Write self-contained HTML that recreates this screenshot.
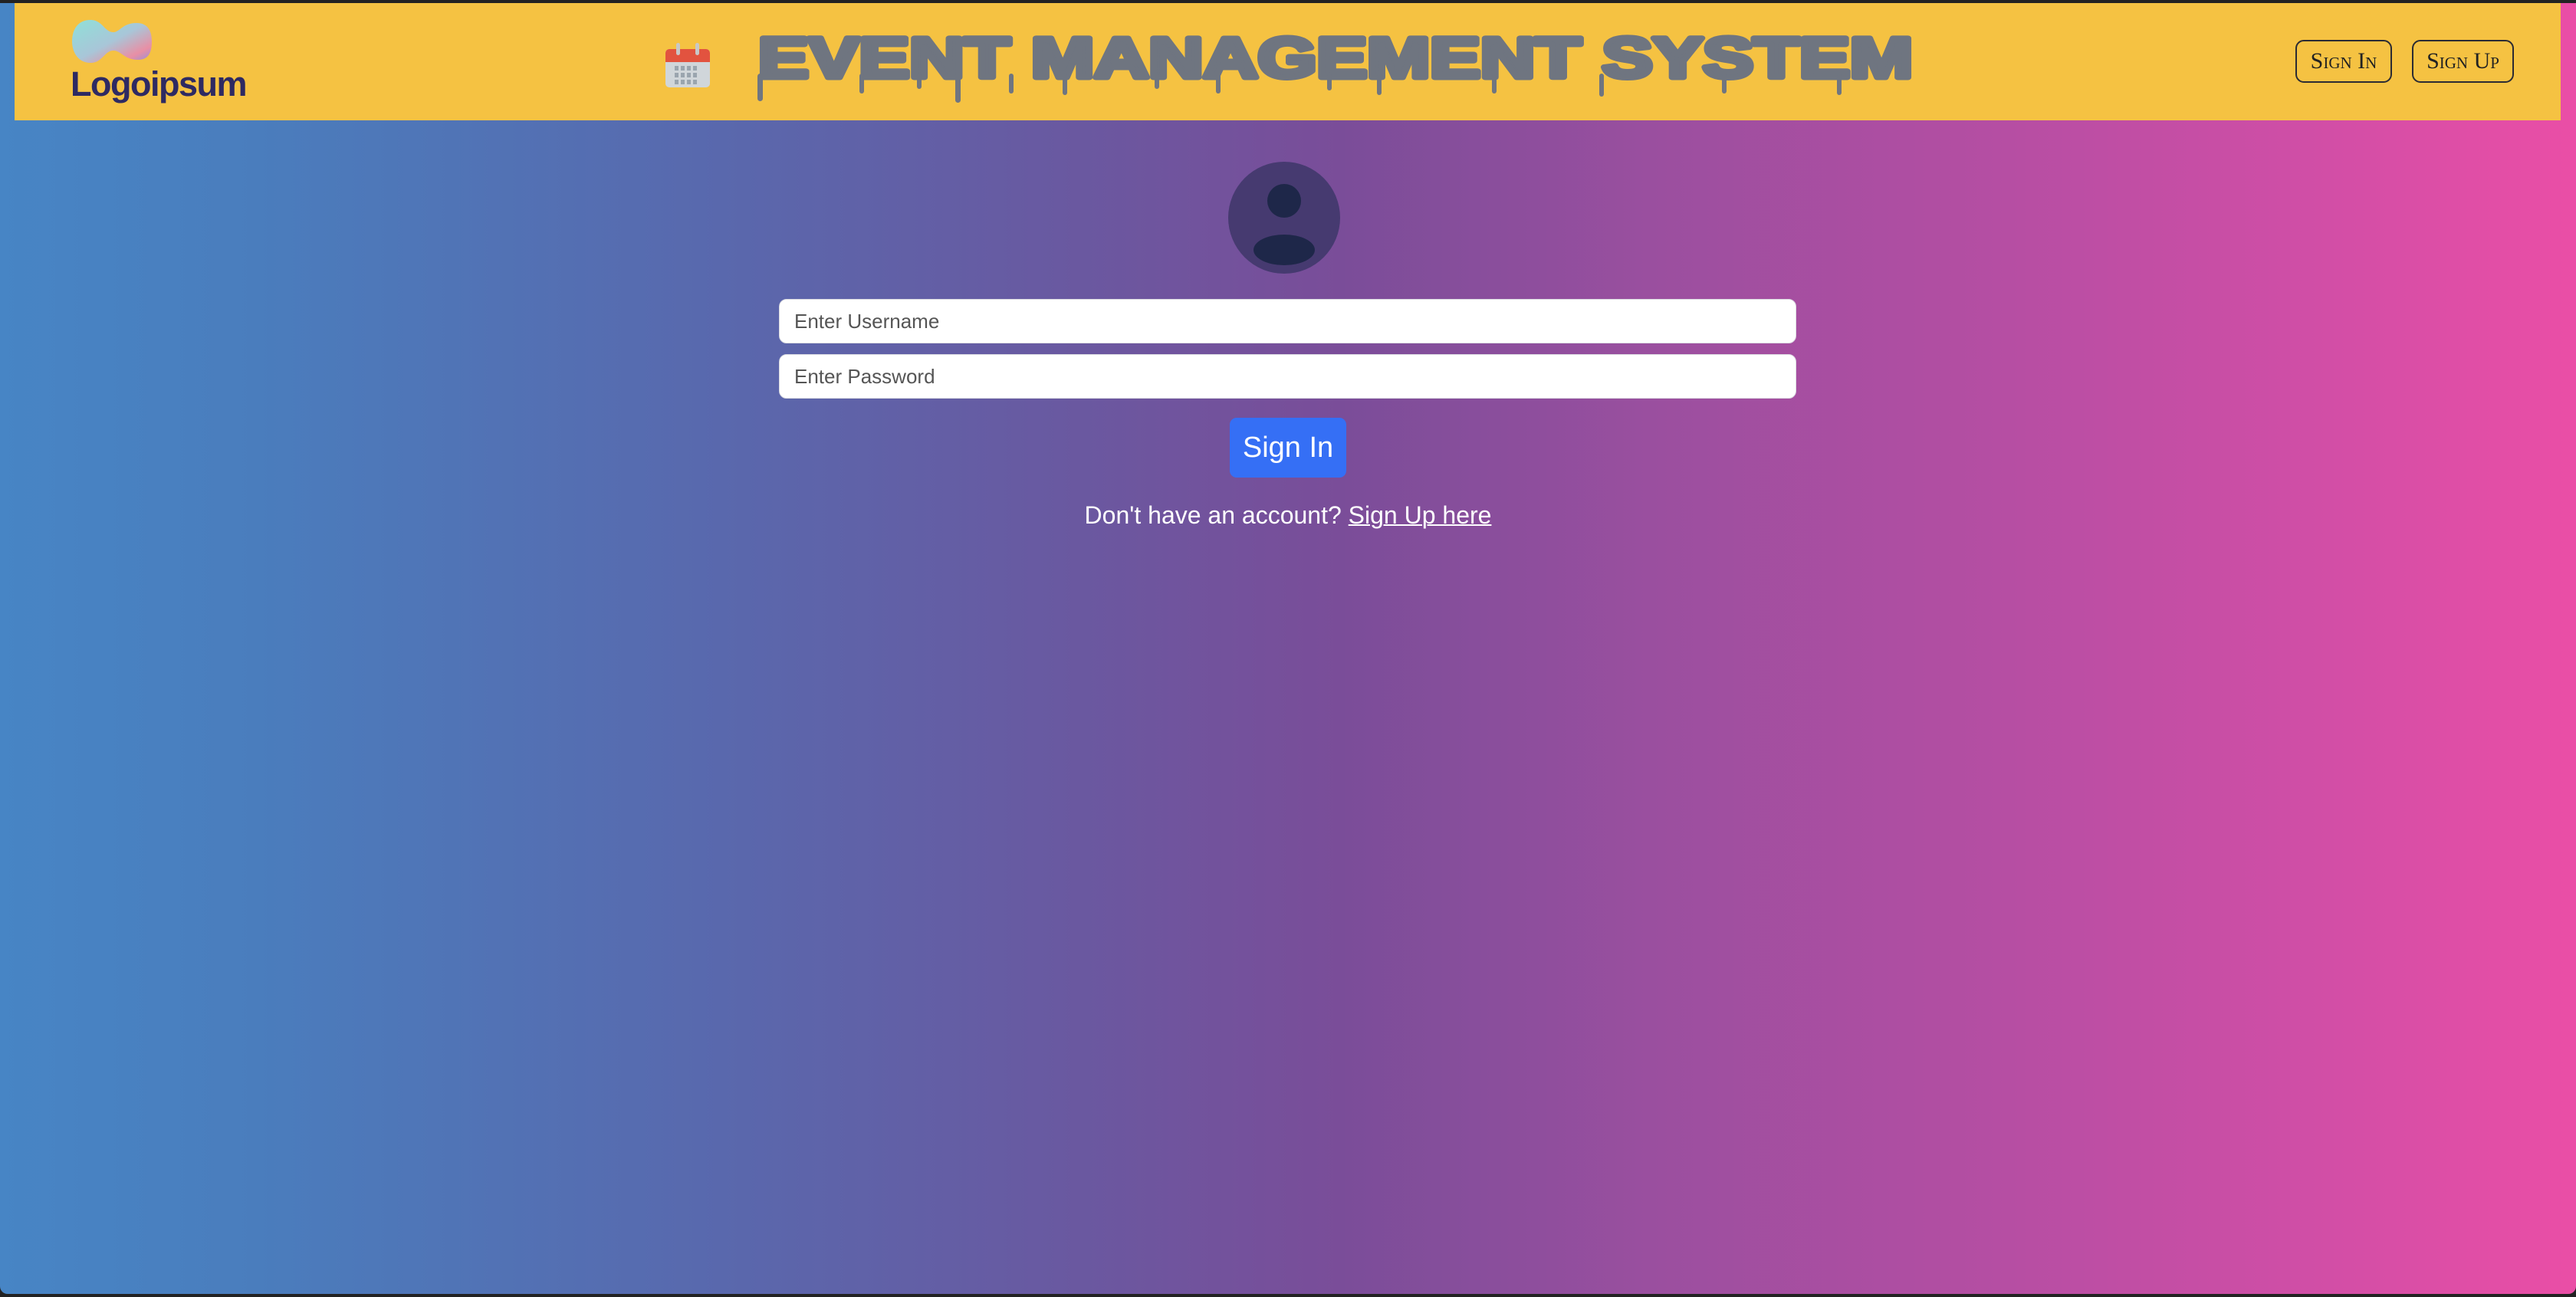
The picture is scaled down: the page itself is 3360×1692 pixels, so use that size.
<!DOCTYPE html>
<html><head><meta charset="utf-8"><style>
html,body{margin:0;padding:0;width:3360px;height:1692px;overflow:hidden;background:#222;}
.page{position:absolute;left:0;top:4px;width:3360px;height:1684px;border-radius:0 0 10px 10px;overflow:hidden;
background:linear-gradient(90deg,#4785c5 0%,#4a7dbd 10%,#5968ad 28%,#6a58a0 42%,#7a4d99 52%,#9a4f9f 64%,#b64ea3 78%,#d14ea6 90%,#ea4ea6 100%);}
.hdr{position:absolute;left:19px;top:0;width:3321px;height:153px;background:#f5c242;}
.logo-t{position:absolute;left:73px;top:80px;font:bold 45px "Liberation Sans",sans-serif;color:#2e2a62;letter-spacing:-1.5px;}
.btn{position:absolute;top:48px;height:56px;border:2px solid #2b2b33;border-radius:11px;box-sizing:border-box;font:30px "Liberation Serif",serif;font-variant:small-caps;color:#222;text-align:center;line-height:52px;}
.inp{position:absolute;left:1016px;width:1327px;height:58px;background:#fff;border-radius:10px;box-sizing:border-box;border:1px solid #dcdde2;font:26px "Liberation Sans",sans-serif;color:#555;padding-left:19px;line-height:57px;}
.sbtn{position:absolute;left:1604px;width:152px;height:78px;background:#356ff5;border-radius:9px;color:#fff;font:38px "Liberation Sans",sans-serif;text-align:center;line-height:78px;}
.foot{position:absolute;left:0;width:3360px;top:650px;text-align:center;color:#fff;font:32px "Liberation Sans",sans-serif;}
.foot u{text-decoration-thickness:2px;}
</style></head><body>
<div class="page">
<div class="hdr">
 <svg style="position:absolute;left:75px;top:22px" width="112" height="56" viewBox="0 0 112 56">
  <defs><linearGradient id="g" x1="0" x2="1" y1="0" y2="1"><stop offset="0" stop-color="#8fe0d8"/><stop offset="0.5" stop-color="#a8c6d8"/><stop offset="0.8" stop-color="#e88fa5"/><stop offset="1" stop-color="#8a8fe0"/></linearGradient></defs>
  <path d="M24 0C40 0 42 16 54 16C62 16 66 4 84 4C100 4 104 16 104 28C104 42 100 52 86 52C68 52 64 40 54 40C42 40 40 56 24 56C8 56 0 42 0 28C0 12 8 0 24 0Z" fill="url(#g)"/>
 </svg>
 <div class="logo-t">Logoipsum</div>
 <svg style="position:absolute;left:847px;top:50px" width="62" height="62" viewBox="0 0 62 62">
  <rect x="2" y="10" width="58" height="50" rx="5" fill="#d0d6da"/>
  <path d="M2 15a5 5 0 0 1 5-5h48a5 5 0 0 1 5 5v12H2z" fill="#e2533f"/>
  <rect x="16" y="2" width="5" height="16" rx="2.5" fill="#c8c8c8"/>
  <rect x="41" y="2" width="5" height="16" rx="2.5" fill="#c8c8c8"/>
  <g fill="#9aa5ae">
   <rect x="14" y="32" width="5" height="6"/><rect x="22" y="32" width="5" height="6"/><rect x="30" y="32" width="5" height="6"/><rect x="38" y="32" width="5" height="6"/>
   <rect x="14" y="41" width="5" height="6"/><rect x="22" y="41" width="5" height="6"/><rect x="30" y="41" width="5" height="6"/><rect x="38" y="41" width="5" height="6"/>
   <rect x="14" y="50" width="5" height="6"/><rect x="22" y="50" width="5" height="6"/><rect x="30" y="50" width="5" height="6"/><rect x="38" y="50" width="5" height="6"/>
  </g>
 </svg>
 <svg style="position:absolute;left:967px;top:20px" width="1520" height="115" viewBox="0 0 1520 115">
  <text x="3" y="77" textLength="1506" lengthAdjust="spacingAndGlyphs" font-family="Liberation Sans, sans-serif" font-weight="bold" font-size="74" fill="#6f7580" stroke="#6f7580" stroke-width="7" stroke-linejoin="round">EVENT MANAGEMENT SYSTEM</text>
  <g fill="#6f7580">
   <rect x="2" y="72" width="7" height="36" rx="3.5"/><rect x="135" y="72" width="6" height="26" rx="3"/><rect x="210" y="72" width="6" height="20" rx="3"/><rect x="260" y="72" width="7" height="38" rx="3.5"/><rect x="330" y="72" width="6" height="26" rx="3"/><rect x="400" y="72" width="6" height="28" rx="3"/><rect x="520" y="72" width="6" height="20" rx="3"/><rect x="600" y="72" width="6" height="26" rx="3"/><rect x="745" y="72" width="6" height="22" rx="3"/><rect x="810" y="72" width="6" height="28" rx="3"/><rect x="960" y="72" width="6" height="26" rx="3"/><rect x="1100" y="72" width="6" height="30" rx="3"/><rect x="1260" y="72" width="6" height="26" rx="3"/><rect x="1410" y="72" width="6" height="28" rx="3"/>
  </g>
 </svg>
 <div class="btn" style="left:2975px;width:126px">Sign In</div>
 <div class="btn" style="left:3127px;width:133px">Sign Up</div>
</div>
<svg style="position:absolute;left:1601px;top:206px" width="148" height="148" viewBox="0 0 148 148">
 <circle cx="74" cy="74" r="73" fill="#463a70"/>
 <ellipse cx="74" cy="52" rx="22" ry="22" fill="#1e2749"/>
 <ellipse cx="74" cy="116" rx="40" ry="20" fill="#1e2749"/>
</svg>
<div class="inp" style="top:386px">Enter Username</div>
<div class="inp" style="top:458px">Enter Password</div>
<div class="sbtn" style="top:541px">Sign In</div>
<div class="foot">Don't have an account? <u>Sign Up here</u></div>
</div>
</body></html>
